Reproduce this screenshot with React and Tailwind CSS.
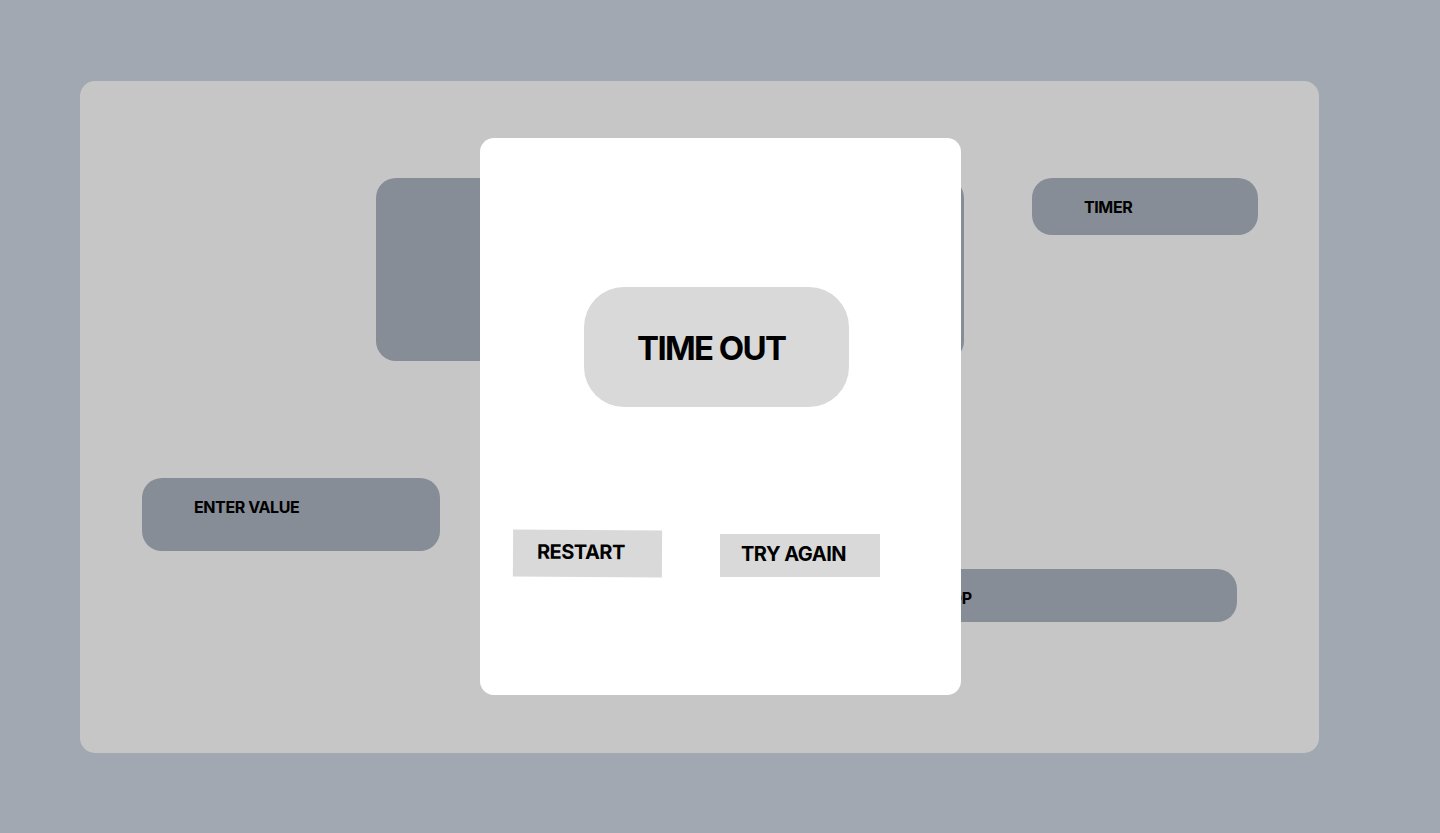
import React from 'react';

const font = { fontFamily: 'Inter, "Liberation Sans", sans-serif' };

const GreyBox = ({ className = '', children }) => (
  <div className={`bg-[#868d96] text-black font-bold text-[16px] tracking-tight ${className}`}>
    {children}
  </div>
);

export default function App() {
  return (
    <div className="w-[1440px] h-[833px] bg-[#a1a8b2] pt-[81px] pl-[80px]" style={font}>
      <div className="relative w-[1239px] h-[672px] bg-[#c6c6c6] rounded-[15px] pt-[97px]">
        {/* Top row */}
        <div className="flex items-start pl-[296px] gap-[68px]">
          <GreyBox className="w-[588px] h-[183px] rounded-[20px]" />
          <GreyBox className="w-[226px] h-[57px] rounded-[20px] flex items-center pl-[52px]">
            TIMER
          </GreyBox>
        </div>

        {/* Input row */}
        <div className="mt-[117px] pl-[62px]">
          <GreyBox className="w-[298px] h-[73px] rounded-[20px] pl-[52px] pt-[17px]">
            ENTER VALUE
          </GreyBox>
        </div>

        {/* Bottom row */}
        <div className="mt-[18px] pl-[794px]">
          <GreyBox className="w-[363px] h-[53px] rounded-[20px] flex items-center pl-[56px] pt-[4px]">
            STOP
          </GreyBox>
        </div>

        {/* Modal */}
        <div className="absolute left-[400px] top-[57px] w-[481px] h-[557px] bg-white rounded-[14px] pt-[149px]">
          <div className="ml-[104px] w-[265px] h-[120px] rounded-[40px] bg-[#d9d9d9] flex items-center pl-[53px] pt-[4px]">
            <span className="text-[33px] font-bold tracking-[-0.05em] text-black">TIME OUT</span>
          </div>

          <div className="mt-[123px] flex items-start">
            <div className="ml-[33px] w-[149px] h-[47px] bg-[#d9d9d9] rotate-[0.35deg] flex items-center pl-[24px] pb-[3px]">
              <span className="text-[20px] font-bold tracking-tight text-black">RESTART</span>
            </div>
            <div className="ml-[58px] mt-[4px] w-[160px] h-[43px] bg-[#d9d9d9] flex items-center pl-[21px] pb-[3px]">
              <span className="text-[20px] font-bold tracking-tight text-black">TRY AGAIN</span>
            </div>
          </div>
        </div>
      </div>
    </div>
  );
}
